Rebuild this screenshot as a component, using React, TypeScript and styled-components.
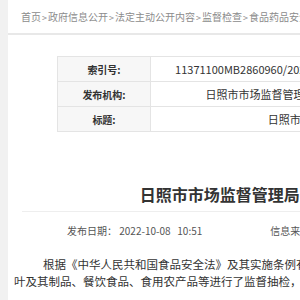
import { createGlobalStyle, styled } from 'styled-components';

const GlobalStyle = createGlobalStyle`
  html, body {
    margin: 0;
    padding: 0;
    background: #f1f1f1;
    overflow: hidden;
  }
  body {
    font-family: "Microsoft YaHei", "Noto Sans CJK SC", sans-serif;
    color: #333;
  }
`;

const meta = [
  { label: '索引号:', value: '11371100MB2860960/2022-00215', label2: '分类:', value2: '监督检查' },
  { label: '发布机构:', value: '日照市市场监督管理局', label2: '发文日期:', value2: '2022-10-08' },
];

const TITLE = '日照市市场监督管理局食品安全监督抽检不合格食品处置（2022年第28期）';

const BODY =
  '根据《中华人民共和国食品安全法》及其实施条例有关规定，日照市市场监督管理局组织对粮食加工品、食用油、油脂及其制品、调味品、肉制品、茶' +
  '叶及其制品、餐饮食品、食用农产品等进行了监督抽检，抽检不合格样品已依法进行核查处置，现将有关情况通告如下。';

export default function App() {
  return (
    <>
      <GlobalStyle />
      <Page>
        <Crumbs>
          {['首页', '政府信息公开', '法定主动公开内容', '监督检查', '食品药品安全监管'].map((c, i) => (
            <span key={c}>
              {i > 0 && <Sep>&gt;</Sep>}
              {c}
            </span>
          ))}
        </Crumbs>
        <Main>
          <MetaTable>
            <colgroup>
              <col width={93} />
              <col width={220} />
              <col width={93} />
              <col />
            </colgroup>
            <tbody>
              {meta.map((m) => (
                <tr key={m.label}>
                  <Label>{m.label}</Label>
                  <Value>{m.value}</Value>
                  <Label>{m.label2}</Label>
                  <Value>{m.value2}</Value>
                </tr>
              ))}
              <tr>
                <Label>标题:</Label>
                <Value colSpan={3}>{TITLE}</Value>
              </tr>
            </tbody>
          </MetaTable>
          <Title>{TITLE}</Title>
          <Info>
            <span>发布日期： 2022-10-08   10:51</span>
            <span>信息来源：日照市市场监督管理局</span>
          </Info>
          <Body>{BODY}</Body>
        </Main>
      </Page>
    </>
  );
}

const Page = styled.div`
  margin-left: 8px;
  width: 800px;
  min-height: 300px;
  background: #fff;
`;

const Crumbs = styled.div`
  height: 33px;
  line-height: 33px;
  padding-left: 13px;
  border-bottom: 2px solid #e8e8e8;
  font-size: 10px;
  color: #8c8c8c;
  white-space: nowrap;
`;

const Sep = styled.span`
  margin: 0 1px;
  font-size: 9px;
`;

const Main = styled.div`
  padding: 21px 6px 0;
`;

const MetaTable = styled.table`
  width: 695px;
  margin-left: 43px;
  border-collapse: collapse;
  table-layout: fixed;
`;

const Label = styled.td`
  height: 24px;
  padding: 0;
  border: 1px solid #e4e4e4;
  background: #f7f7f7;
  text-align: center;
  font-size: 10px;
  font-weight: bold;
  color: #333;
`;

const Value = styled.td`
  height: 24px;
  padding: 0;
  border: 1px solid #e4e4e4;
  text-align: center;
  font-size: 11px;
  color: #333;
  white-space: nowrap;
`;

const Title = styled.h1`
  margin: 50px 8px 0;
  padding-bottom: 5px;
  line-height: 24px;
  border-bottom: 1px solid #eeeeee;
  text-align: center;
  font-size: 16px;
  font-weight: bold;
  color: #333;
  white-space: nowrap;
`;

const Info = styled.div`
  margin-top: 9px;
  padding-left: 53px;
  display: flex;
  gap: 68px;
  line-height: 20px;
  font-size: 10px;
  color: #555;
  white-space: pre;
`;

const Body = styled.p`
  margin: 15px 0 0;
  width: 790px;
  text-indent: 29px;
  font-size: 11.5px;
  line-height: 17px;
  color: #333;
`;
